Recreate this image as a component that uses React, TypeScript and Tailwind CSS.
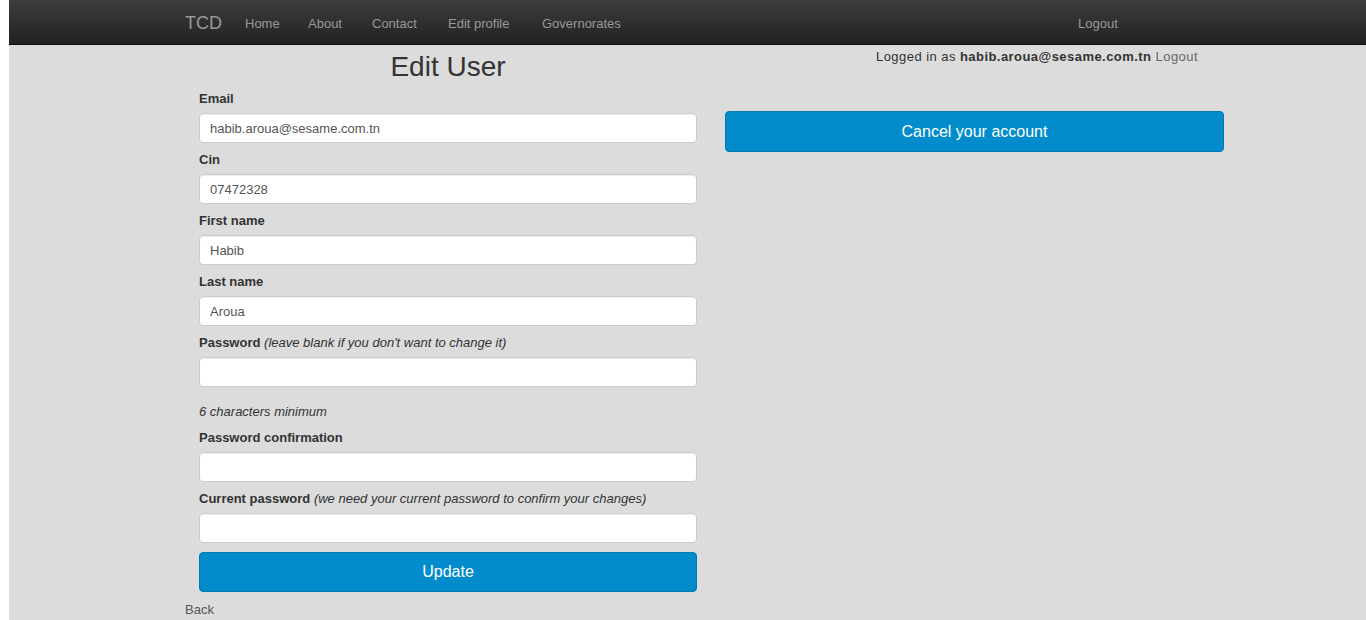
import React from "react";

const fields = [
  { label: "Email", value: "habib.aroua@sesame.com.tn" },
  { label: "Cin", value: "07472328" },
  { label: "First name", value: "Habib" },
  { label: "Last name", value: "Aroua" },
];

// widths keep each link at its place in the bar
const navLinks = [
  { text: "Home", w: "w-[63px]" },
  { text: "About", w: "w-[64px]" },
  { text: "Contact", w: "w-[76px]" },
  { text: "Edit profile", w: "w-[94px]" },
  { text: "Governorates", w: "w-[90px]" },
];

const inputCls =
  "block h-[30px] w-full rounded-[4px] border border-[#cccccc] bg-white px-[10px] text-[13px] text-[#555555] shadow-[inset_0_1px_1px_rgba(0,0,0,0.075)] outline-none";

const Label = ({ children, hint }: { children: React.ReactNode; hint?: string }) => (
  <label className="mb-[5px] block h-[18px] text-[13px] leading-[18px] font-bold text-[#333333]">
    {children}
    {hint ? <em className="font-normal text-[#333333]"> {hint}</em> : null}
  </label>
);

export default function App() {
  return (
    <div className="min-h-[620px] bg-white pl-[9px] font-['Liberation_Sans',Arial,sans-serif]">
      <div className="min-h-[620px] bg-[#dcdcdc]">
        <nav className="h-[45px] border-b border-[#0c0c0c] bg-gradient-to-b from-[#3d3d3d] to-[#222222]">
          <div className="flex h-[44px] items-center pt-[3px] pl-[176px]">
            <a className="w-[60px] text-[18px] text-[#999999]">TCD</a>
            <ul className="flex items-center">
              {navLinks.map((l) => (
                <li key={l.text} className={`${l.w} text-[13px] text-[#999999]`}>
                  {l.text}
                </li>
              ))}
            </ul>
            <a className="ml-[446px] text-[13px] text-[#999999]">Logout</a>
          </div>
        </nav>

        <div className="ml-[176px] w-[1040px]">
          <div className="flex">
            <div className="ml-[14px] w-[498px]">
              <h1 className="mt-[2px] mb-[3px] h-[40px] text-center text-[28px] leading-[40px] font-normal text-[#333333]">
                Edit User
              </h1>
              {fields.map((f) => (
                <div key={f.label} className="mb-[8px]">
                  <Label>{f.label}</Label>
                  <input className={inputCls} defaultValue={f.value} />
                </div>
              ))}
              <div className="mb-[8px]">
                <Label hint="(leave blank if you don't want to change it)">Password</Label>
                <input type="password" className={inputCls} />
              </div>
              <p className="mt-[16px] mb-[8px] h-[18px] text-[13px] leading-[18px] text-[#333333] italic">
                6 characters minimum
              </p>
              <div className="mb-[8px]">
                <Label>Password confirmation</Label>
                <input type="password" className={inputCls} />
              </div>
              <div className="mb-[9px]">
                <Label hint="(we need your current password to confirm your changes)">
                  Current password
                </Label>
                <input type="password" className={inputCls} />
              </div>
              <button className="h-[40px] w-full rounded-[4px] border border-[#0379b0] bg-[#038ccb] text-[16px] font-light text-white">
                Update
              </button>
            </div>

            <div className="ml-[28px] w-[499px]">
              <p className="mt-[3px] pr-[26px] text-right text-[13px] leading-[18px] tracking-[0.45px] text-[#333333]">
                Logged in as <strong>habib.aroua@sesame.com.tn</strong>{" "}
                <a className="text-[#666666]">Logout</a>
              </p>
              <button className="mt-[45px] h-[41px] w-full rounded-[4px] border border-[#0379b0] bg-[#038ccb] text-[16px] font-light text-white">
                Cancel your account
              </button>
            </div>
          </div>
          <a className="mt-[9px] block text-[13px] leading-[18px] text-[#555555]">Back</a>
        </div>
      </div>
    </div>
  );
}
